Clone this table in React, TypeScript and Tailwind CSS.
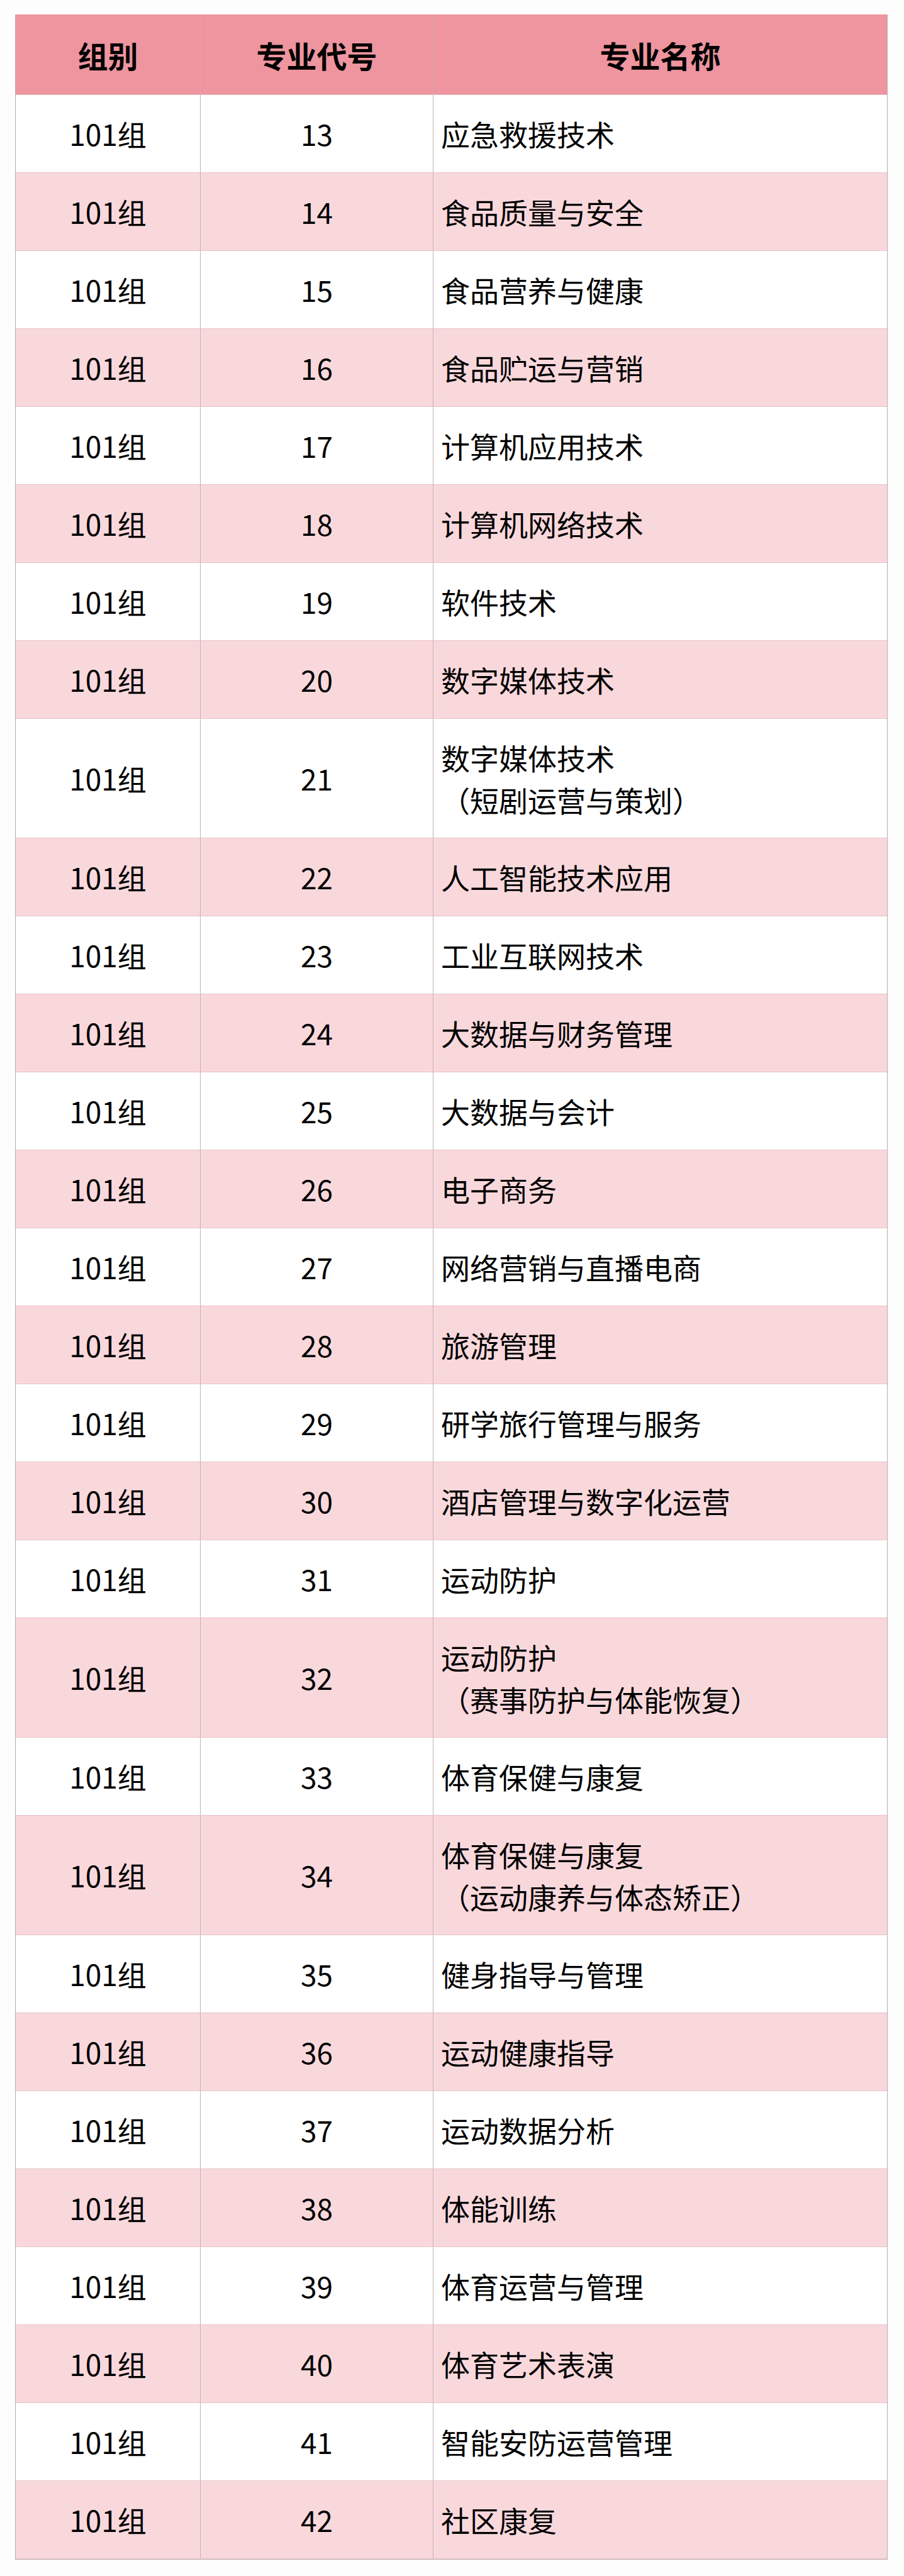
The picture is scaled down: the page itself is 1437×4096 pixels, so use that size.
const rows: { code: number; name: string; sub?: string }[] = [
  { code: 13, name: "应急救援技术" },
  { code: 14, name: "食品质量与安全" },
  { code: 15, name: "食品营养与健康" },
  { code: 16, name: "食品贮运与营销" },
  { code: 17, name: "计算机应用技术" },
  { code: 18, name: "计算机网络技术" },
  { code: 19, name: "软件技术" },
  { code: 20, name: "数字媒体技术" },
  { code: 21, name: "数字媒体技术", sub: "（短剧运营与策划）" },
  { code: 22, name: "人工智能技术应用" },
  { code: 23, name: "工业互联网技术" },
  { code: 24, name: "大数据与财务管理" },
  { code: 25, name: "大数据与会计" },
  { code: 26, name: "电子商务" },
  { code: 27, name: "网络营销与直播电商" },
  { code: 28, name: "旅游管理" },
  { code: 29, name: "研学旅行管理与服务" },
  { code: 30, name: "酒店管理与数字化运营" },
  { code: 31, name: "运动防护" },
  { code: 32, name: "运动防护", sub: "（赛事防护与体能恢复）" },
  { code: 33, name: "体育保健与康复" },
  { code: 34, name: "体育保健与康复", sub: "（运动康养与体态矫正）" },
  { code: 35, name: "健身指导与管理" },
  { code: 36, name: "运动健康指导" },
  { code: 37, name: "运动数据分析" },
  { code: 38, name: "体能训练" },
  { code: 39, name: "体育运营与管理" },
  { code: 40, name: "体育艺术表演" },
  { code: 41, name: "智能安防运营管理" },
  { code: 42, name: "社区康复" },
];

const font = { fontFamily: '"Noto Sans CJK SC", "Noto Sans", sans-serif' };

export default function App() {
  return (
    <div className="min-h-screen w-full bg-[#fdfdfd] pt-[23px] pl-[24px]" style={font}>
      <div className="w-[1387px] border-x border-b border-[#b9adb0] text-black">
        <div className="grid h-[128px] grid-cols-[294px_370px_721px] bg-[#ee959f] border-b border-[#e6b8be]">
          <div className="flex items-center justify-center border-r border-[#d9a5ad] text-[48px] font-bold">
            组别
          </div>
          <div className="flex items-center justify-center border-r border-[#d9a5ad] text-[48px] font-bold">
            专业代号
          </div>
          <div className="flex items-center justify-center text-[48px] font-bold">
            专业名称
          </div>
        </div>
        {rows.map((r, i) => (
          <div
            key={r.code}
            className={`grid grid-cols-[294px_370px_721px] border-b border-[#e6c3c8] text-[46px] ${
              r.sub ? "h-[190px]" : "h-[124px]"
            } ${i % 2 === 1 ? "bg-[#f9d8dc]" : "bg-white"}`}
          >
            <div className="flex items-center justify-center border-r border-[#bfb2b5]">101组</div>
            <div className="flex items-center justify-center border-r border-[#bfb2b5]">{r.code}</div>
            <div className="flex flex-col justify-center pl-[12px] leading-[67px]">
              <span>{r.name}</span>
              {r.sub && <span>{r.sub}</span>}
            </div>
          </div>
        ))}
      </div>
    </div>
  );
}
